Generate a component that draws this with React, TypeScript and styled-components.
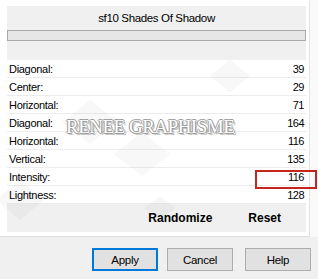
import { FC } from 'react';
import styled, { createGlobalStyle } from 'styled-components';

const GlobalStyle = createGlobalStyle`
  html, body {
    margin: 0;
    padding: 0;
    background: #fafafa;
  }
  body {
    font-family: 'Liberation Sans', Arial, sans-serif;
    color: #000;
  }
`;

const Window = styled.div`
  position: relative;
  width: 318px;
  height: 279px;
  overflow: hidden;
  display: flex;
  flex-direction: column;
`;

const Content = styled.div`
  position: relative;
  width: 310px;
  height: 237px;
  background: #fff;
  border-right: 1px solid #e3e3e3;
  border-bottom: 1px solid #dedede;
  padding: 6px 0 0 7px;
  box-sizing: border-box;
`;

const Panel = styled.div`
  width: 299px;
  height: 226px;
  background: #f0f0f0;
  display: flex;
  flex-direction: column;
`;

const Title = styled.div`
  height: 24px;
  display: flex;
  align-items: center;
  justify-content: center;
  font-size: 11.5px;
  letter-spacing: -0.35px;
`;

const Progress = styled.div`
  height: 9px;
  border: 1px solid #a9a9a9;
  background: #e6e6e6;
`;

const ParamList = styled.div`
  margin-top: 19px;
  background: #fff;
  display: flex;
  flex-direction: column;
`;

const Row = styled.div`
  height: 17px;
  border-bottom: 1px solid #ececec;
  display: flex;
  align-items: center;
  justify-content: space-between;
  padding: 0 2px 0 2px;
  font-size: 11px;
  letter-spacing: -0.3px;
`;

const Value = styled.span`
  letter-spacing: -0.5px;
`;

const ActionBar = styled.div`
  flex: 1;
  display: flex;
  align-items: center;
  justify-content: flex-end;
  gap: 36px;
  padding-right: 25px;
  font-size: 12px;
  font-weight: bold;
`;

const Footer = styled.div`
  flex: 1;
  background: #f0f0f0;
  display: flex;
  align-items: flex-start;
  padding: 11px 0 0 92px;
`;

const Button = styled.div<{ $primary?: boolean; $gap?: number }>`
  width: 66px;
  height: 23px;
  box-sizing: border-box;
  margin-left: ${({ $gap }) => $gap ?? 0}px;
  background: #e1e1e1;
  border: ${({ $primary }) => ($primary ? '2px solid #0078d7' : '1px solid #adadad')};
  display: flex;
  align-items: center;
  justify-content: center;
  font-size: 11.5px;
  letter-spacing: -0.3px;
`;

const Watermark = styled.div`
  position: absolute;
  left: 66px;
  top: 116px;
  font-family: 'Liberation Serif', 'Times New Roman', serif;
  font-size: 19px;
  letter-spacing: -0.5px;
  color: #fff;
  pointer-events: none;
  text-shadow:
    -1px 0 #9a9a9a,
    1px 0 #9a9a9a,
    0 -1px #9a9a9a,
    0 1px #9a9a9a,
    2px 2px #c4c4c4;
`;

const Shapes = styled.svg`
  position: absolute;
  left: 0;
  top: 0;
  pointer-events: none;
`;

const Highlight = styled.div`
  position: absolute;
  left: 255px;
  top: 170px;
  width: 62px;
  height: 19px;
  box-sizing: border-box;
  border: 2px solid #c4261d;
`;

const params: [string, number][] = [
  ['Diagonal:', 39],
  ['Center:', 29],
  ['Horizontal:', 71],
  ['Diagonal:', 164],
  ['Horizontal:', 116],
  ['Vertical:', 135],
  ['Intensity:', 116],
  ['Lightness:', 128],
];

const App: FC = () => (
  <Window>
    <GlobalStyle />
    <Content>
      <Panel>
        <Title>sf10 Shades Of Shadow</Title>
        <Progress />
        <ParamList>
          {params.map(([label, value], i) => (
            <Row key={i}>
              <span>{label}</span>
              <Value>{value}</Value>
            </Row>
          ))}
        </ParamList>
        <ActionBar>
          <span>Randomize</span>
          <span>Reset</span>
        </ActionBar>
      </Panel>
      {/* faint diamond watermark pattern */}
      <Shapes width="310" height="237" viewBox="0 0 310 237">
        <g fill="#000" opacity="0.025">
          <path d="M90 100 L118 122 L90 144 L62 122 Z" />
          <path d="M142 132 L170 154 L142 176 L114 154 Z" />
          <path d="M20 180 L44 200 L20 220 L-4 200 Z" />
          <path d="M160 196 L176 208 L160 220 L144 208 Z" />
          <path d="M230 60 L250 76 L230 92 L210 76 Z" />
        </g>
      </Shapes>
      <Watermark>RENEE GRAPHISME</Watermark>
    </Content>
    <Footer>
      <Button $primary>Apply</Button>
      <Button $gap={9}>Cancel</Button>
      <Button $gap={12}>Help</Button>
    </Footer>
    <Highlight />
  </Window>
);

export default App;
